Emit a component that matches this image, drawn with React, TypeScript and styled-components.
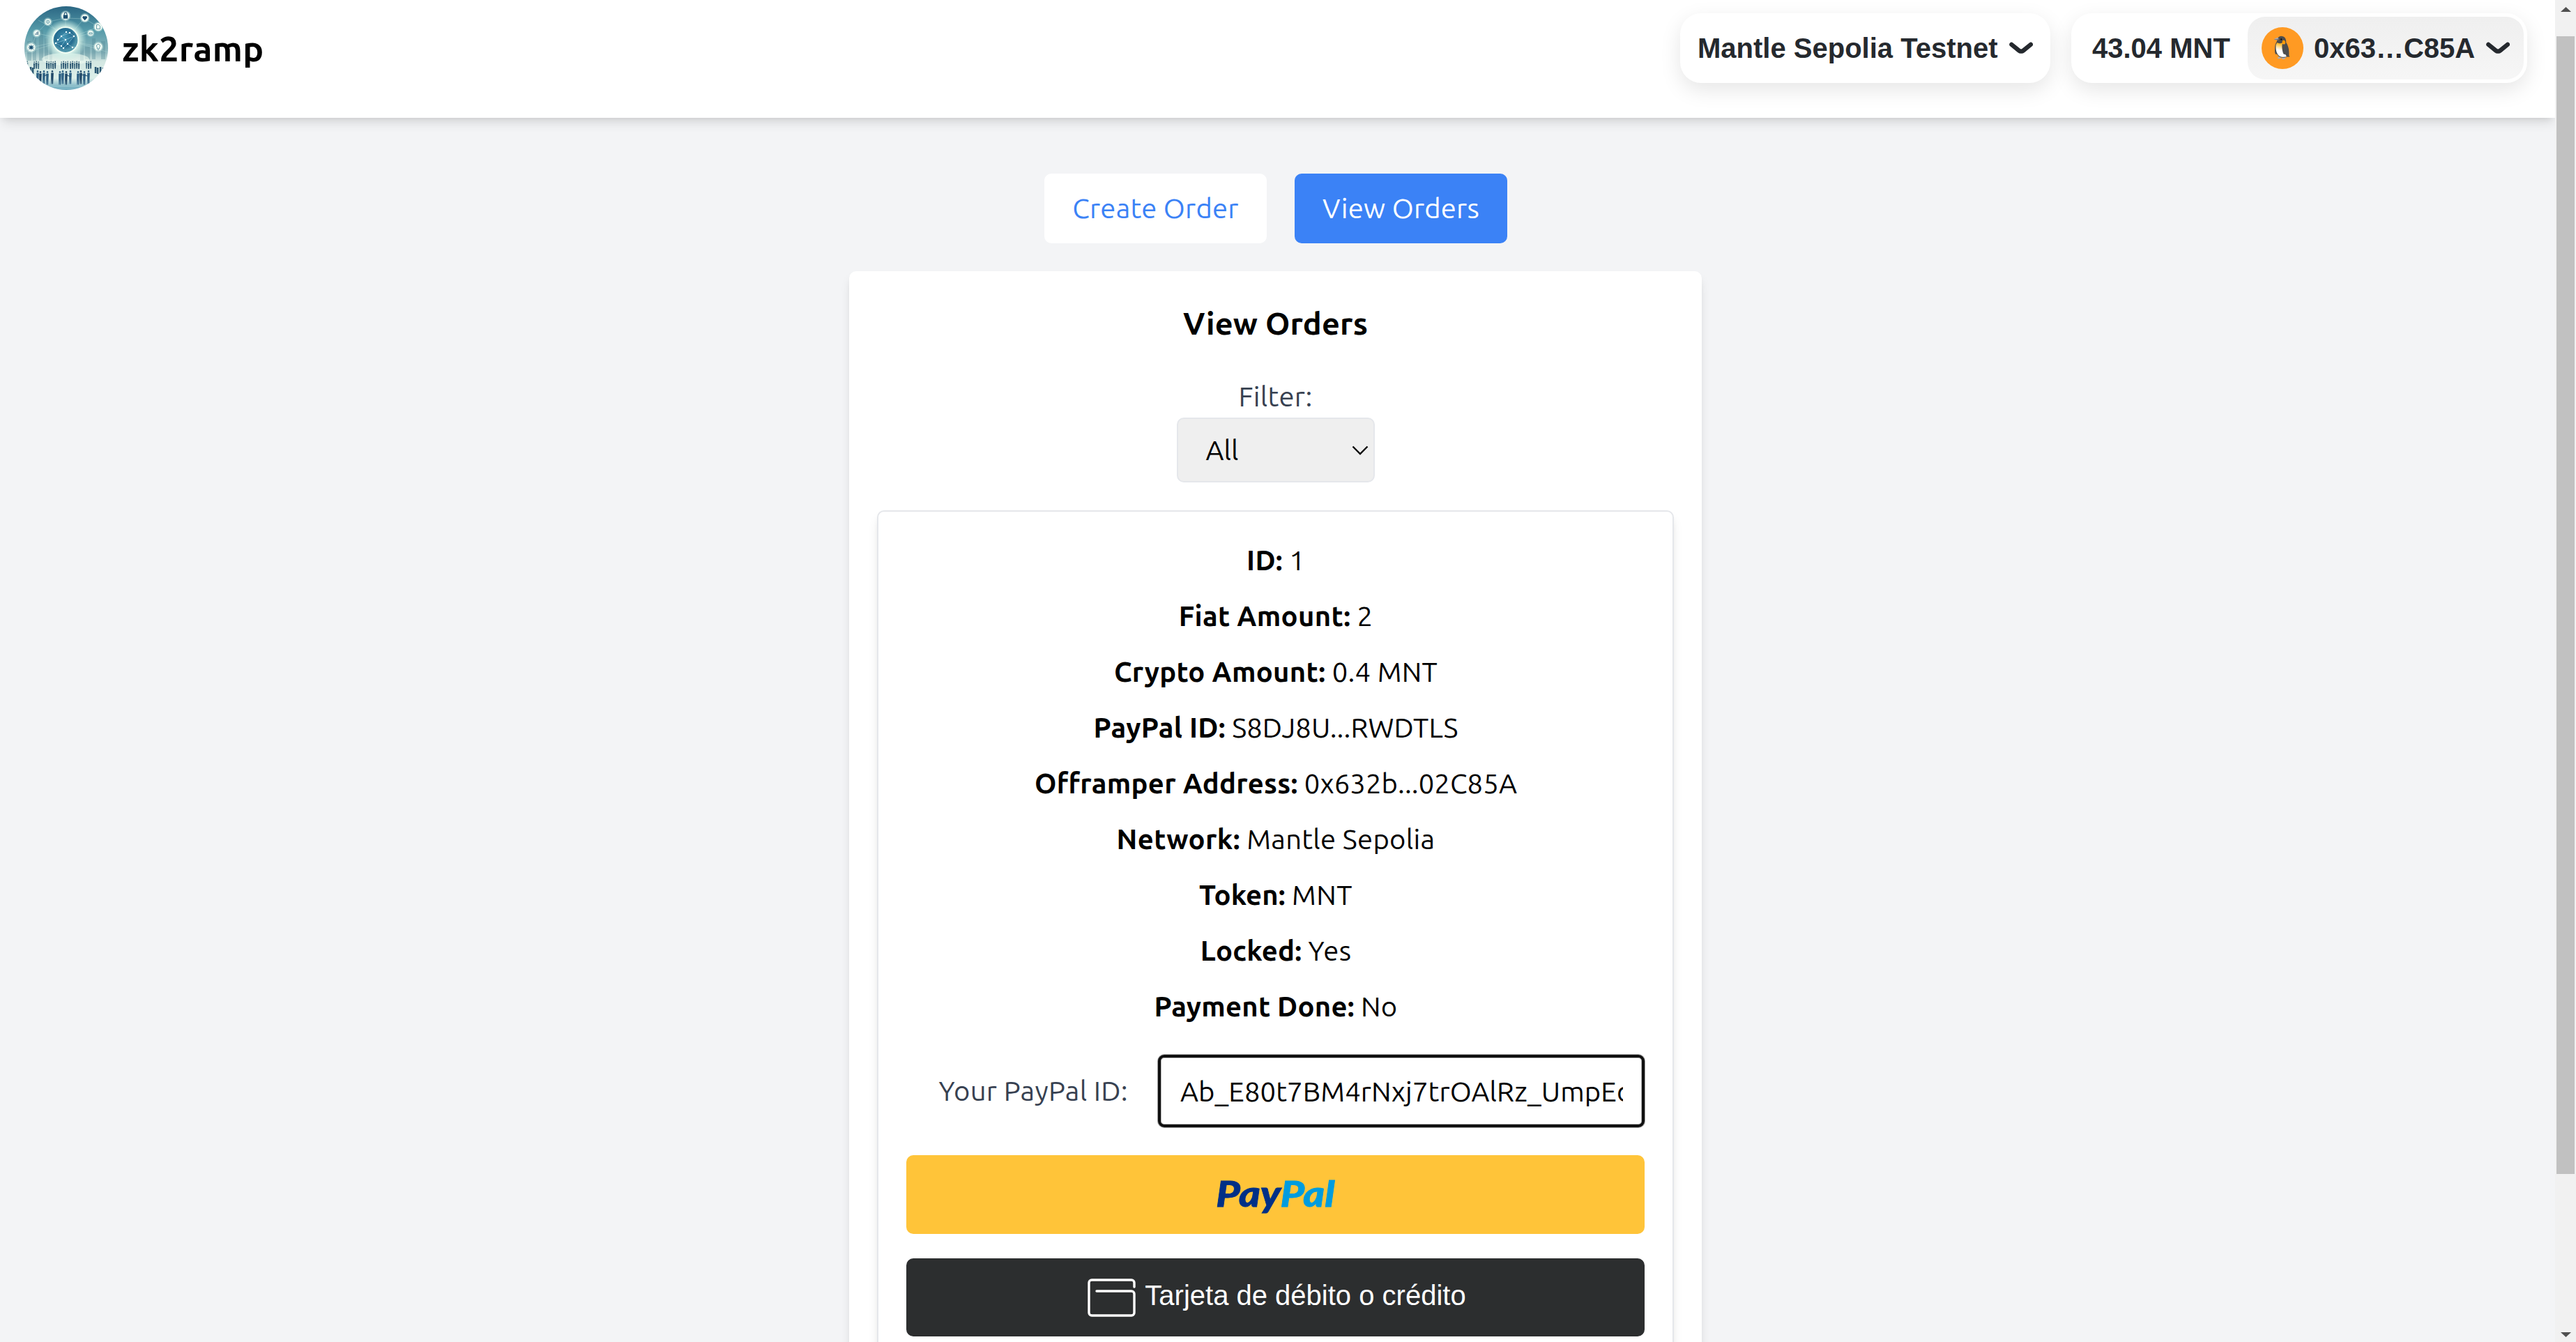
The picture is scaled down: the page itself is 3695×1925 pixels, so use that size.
import React from "react";
import styled, { createGlobalStyle } from "styled-components";

const GlobalStyle = createGlobalStyle`
  *, *::before, *::after { box-sizing: border-box; }
  html, body { margin: 0; padding: 0; overflow: hidden; }
  body {
    background: #f3f4f6;
    color: #000;
    font-family: Ubuntu, "Noto Sans", sans-serif;
    font-size: 40px;
    line-height: 60px;
  }
  button, input { font: inherit; color: inherit; }
`;

const Window = styled.div`
  display: flex;
  width: 3695px;
  height: 1925px;
  overflow: hidden;
`;

const Page = styled.div`
  display: flex;
  flex-direction: column;
  width: 3665px;
  height: 1925px;
  overflow: hidden;
  background: #f3f4f6;
`;

const Header = styled.header`
  display: flex;
  flex: none;
  align-items: center;
  justify-content: space-between;
  height: 169px;
  padding: 9px 40px 40px 35px;
  background: #fff;
  box-shadow: 0 10px 15px -2.5px rgba(0, 0, 0, 0.1), 0 5px 10px -5px rgba(0, 0, 0, 0.1);
  z-index: 1;
`;

const Brand = styled.div`
  display: flex;
  align-items: center;
  gap: 20px;
`;

const BrandName = styled.h1`
  margin: 0;
  font-size: 50px;
  font-weight: 700;
  line-height: 70px;
  letter-spacing: 0.35px;
`;

const Wallet = styled.div`
  display: flex;
  gap: 30px;
  color: #25292e;
  font-family: "Liberation Sans", Arial, sans-serif;
  font-weight: 700;
  line-height: 46px;
`;

const Pill = styled.div<{ $width: number; $pad: string }>`
  display: flex;
  align-items: center;
  justify-content: space-between;
  width: ${(p) => p.$width}px;
  height: 100px;
  padding: ${(p) => p.$pad};
  border-radius: 30px;
  background: #fff;
  box-shadow: 0 10px 30px rgba(0, 0, 0, 0.1);
  white-space: nowrap;
`;

const Account = styled.div`
  display: flex;
  align-items: center;
  width: 396px;
  height: 90px;
  padding: 0 20px;
  border-radius: 25px;
  background: linear-gradient(#efefef, #f6f6f6);
`;

const Avatar = styled.span`
  display: flex;
  flex: none;
  align-items: center;
  justify-content: center;
  width: 60px;
  height: 60px;
  margin-right: 15px;
  border-radius: 50%;
  background: #ff9a23;
  font-family: "Noto Color Emoji", sans-serif;
  font-size: 31px;
  font-weight: 400;
  line-height: 60px;
`;

const Address = styled.span`
  flex: 1;
`;

const ChevronSvg = styled.svg`
  display: block;
  flex: none;
  width: 35px;
  height: 17.5px;
`;

const Main = styled.main`
  display: flex;
  flex-direction: column;
  align-items: center;
  padding: 80px 5px 0 0;
`;

const Tabs = styled.nav`
  display: flex;
  gap: 40px;
  margin-bottom: 40px;
`;

const Tab = styled.button<{ $active?: boolean; $width: number }>`
  width: ${(p) => p.$width}px;
  height: 100px;
  padding: 0;
  border: 0;
  border-radius: 10px;
  background: ${(p) => (p.$active ? "#3b82f6" : "#fff")};
  color: ${(p) => (p.$active ? "#fff" : "#3b82f6")};
  letter-spacing: 0.2px;
`;

const Card = styled.section`
  display: flex;
  flex: none;
  flex-direction: column;
  align-items: center;
  width: 1223px;
  height: 1700px;
  margin-right: 1px;
  padding: 40px;
  border-radius: 10px;
  background: #fff;
  box-shadow: 0 10px 15px -2.5px rgba(0, 0, 0, 0.1), 0 5px 10px -5px rgba(0, 0, 0, 0.1);
`;

const Heading = styled.h2`
  margin: 0 0 40px;
  font-size: 45px;
  font-weight: 700;
  line-height: 70px;
  letter-spacing: 0.15px;
`;

const Label = styled.label`
  color: #374151;
  letter-spacing: 0.28px;
`;

const Select = styled.div`
  display: flex;
  flex: none;
  align-items: center;
  justify-content: space-between;
  width: 284px;
  height: 93px;
  margin-bottom: 40px;
  padding: 0 7px 0 40px;
  border: 2px solid #e5e7eb;
  border-radius: 10px;
  background: #efefef;
`;

const SelectArrow = styled.svg`
  display: block;
  width: 24px;
  height: 14px;
`;

const Order = styled.article`
  display: flex;
  flex: none;
  flex-direction: column;
  width: 1143px;
  height: 1500px;
  padding: 40px;
  border: 2px solid #e5e7eb;
  border-radius: 10px;
  background: #fff;
  box-shadow: 0 10px 15px -2.5px rgba(0, 0, 0, 0.1), 0 5px 10px -5px rgba(0, 0, 0, 0.1);
`;

const Field = styled.p`
  margin: 0 0 20px;
  padding-left: 1px;
  text-align: center;
  white-space: nowrap;
`;

const FieldName = styled.strong<{ $track: number }>`
  font-weight: 700;
  letter-spacing: ${(p) => p.$track}px;
`;

const FieldValue = styled.span<{ $track: number }>`
  letter-spacing: ${(p) => p.$track}px;
`;

const PayerRow = styled.div`
  display: flex;
  align-items: center;
  justify-content: flex-end;
  gap: 43px;
  margin: 19px 0 40px;
`;

const PayerInput = styled.input`
  width: 698px;
  height: 104px;
  padding: 0 27px 0 28px;
  border: 4px solid #101010;
  border-radius: 9px;
  outline: none;
  background: #fff;
  box-shadow: 0 0 0 1px #a3a3a3, inset 0 0 0 1px #b5b5b5;
  letter-spacing: 0.11px;
`;

const PayButton = styled.button<{ $dark?: boolean }>`
  display: flex;
  flex: none;
  align-items: center;
  justify-content: center;
  height: ${(p) => (p.$dark ? 112 : 113)}px;
  margin: 0 0 35px;
  padding: 0 0 0 ${(p) => (p.$dark ? 4 : 0)}px;
  border: 0;
  border-radius: 10px;
  background: ${(p) => (p.$dark ? "#2c2e2f" : "#ffc439")};
  color: #fff;
  font-family: "Liberation Sans", Arial, sans-serif;
`;

const Wordmark = styled.span`
  display: block;
  padding-bottom: 6px;
  color: #003087;
  font-family: Lato, sans-serif;
  font-size: 52px;
  font-style: italic;
  font-weight: 900;
  line-height: 60px;
  transform: scaleX(1.13);
  -webkit-text-stroke: 0.8px currentColor;
`;

const WordmarkTail = styled.span`
  color: #009cde;
`;

const CardIcon = styled.svg`
  display: block;
  width: 69px;
  height: 55px;
  margin-right: 13px;
`;

const CardText = styled.span`
  padding-bottom: 7px;
`;

const ScrollTrack = styled.div`
  display: flex;
  flex-direction: column;
  align-items: center;
  justify-content: space-between;
  width: 30px;
  height: 1925px;
  padding: 10px 0 7px;
  background: #f1f1f1;
`;

const ScrollThumb = styled.div`
  width: 26px;
  height: 1632px;
  margin: 35px 0 auto;
  background: #c1c1c1;
`;

const ScrollArrow = styled.svg`
  display: block;
  width: 15px;
  height: 7px;
`;

const Chevron = () => (
  <ChevronSvg viewBox="0 0 14 7" fill="none">
    <path
      d="M12.75 1.54001L8.51647 5.0038C7.77974 5.60658 6.72026 5.60658 5.98352 5.0038L1.75 1.54001"
      stroke="currentColor"
      strokeWidth="2.5"
      strokeLinecap="round"
      strokeLinejoin="round"
    />
  </ChevronSvg>
);

const nodes = [
  { x: 59, y: 13.7, r: 5.8 },
  { x: 86.7, y: 16.7, r: 5.2 },
  { x: 106, y: 29.5, r: 5.6 },
  { x: 95, y: 38.5, r: 3.8 },
  { x: 106, y: 58, r: 5.6 },
  { x: 33.7, y: 22.3, r: 4.4 },
  { x: 17.7, y: 38.7, r: 4.4 },
  { x: 9.7, y: 59, r: 5.8 },
];

const farPeople = [4, 14, 17, 20, 32, 35, 38, 41, 44, 53, 56, 59, 62, 66, 69, 72, 75, 78, 89, 92, 95];
const nearPeople = [19, 23, 28, 33, 40, 51, 55, 60, 66, 77, 81, 86, 92];
const sidePeople = [9, 12, 102, 105, 109, 113];
const stars = [
  [53, 43], [59, 48], [65, 38], [71, 43], [62, 54], [53, 57], [48, 48], [69, 59], [56, 60], [45, 53], [60, 37],
];
const towers = [
  [4, 50, 6, 28], [12, 44, 5, 34], [21, 34, 6, 44], [29, 46, 5, 30], [36, 55, 4, 22], [80, 50, 5, 28],
  [87, 58, 7, 18], [97, 46, 5, 30], [110, 50, 6, 26],
];

const Logo = () => (
  <svg width="120" height="120" viewBox="0 0 120 120">
    <defs>
      <linearGradient id="sky" x1="0" y1="0" x2="0" y2="1">
        <stop offset="0" stopColor="#2a6683" />
        <stop offset="0.28" stopColor="#559aa9" />
        <stop offset="0.55" stopColor="#8fb9bf" />
        <stop offset="0.66" stopColor="#d3e7e2" />
        <stop offset="0.86" stopColor="#dcefe9" />
        <stop offset="1" stopColor="#5c9fb6" />
      </linearGradient>
      <radialGradient id="glow">
        <stop offset="0.58" stopColor="#f4fff2" stopOpacity="1" />
        <stop offset="0.7" stopColor="#d9f6ec" stopOpacity="0.7" />
        <stop offset="1" stopColor="#c8eee6" stopOpacity="0" />
      </radialGradient>
      <radialGradient id="globe" cx="0.45" cy="0.4">
        <stop offset="0" stopColor="#4596b4" />
        <stop offset="0.7" stopColor="#246c90" />
        <stop offset="1" stopColor="#4f95aa" />
      </radialGradient>
      <clipPath id="disc">
        <circle cx="60" cy="60" r="60" />
      </clipPath>
    </defs>
    <g clipPath="url(#disc)">
      <rect width="120" height="120" fill="url(#sky)" />
      {towers.map(([x, y, w, h]) => (
        <rect key={x} x={x} y={y} width={w} height={h} fill="#4f8795" opacity="0.35" />
      ))}
      <g stroke="#bfe3df" strokeWidth="0.5" opacity="0.65">
        {nodes.map((n) => (
          <line key={n.x + n.y} x1="59" y1="48" x2={n.x} y2={n.y} />
        ))}
        <path d="M9.7 59L17.7 38.7 33.7 22.3 59 17 86.7 18 106 29.5M0 67L40 55M120 66L78 53M20 20L46 34" fill="none" />
      </g>
      <ellipse cx="59" cy="76" rx="34" ry="9" fill="#f0fbf2" opacity="0.6" />
      <circle cx="59" cy="48.5" r="30" fill="url(#glow)" />
      <circle cx="59" cy="48.5" r="18.2" fill="url(#globe)" stroke="#f1fff4" strokeWidth="1.6" />
      <path
        d="M45 53L53 43 65 38 71 43 59 48 53 57 45 53 59 48 62 54 69 59M48 48L60 37M56 60L62 54 71 43M53 43L59 48M69 59L76 58"
        fill="none"
        stroke="#a8dbe6"
        strokeWidth="0.5"
      />
      {stars.map(([x, y]) => (
        <circle key={`${x}-${y}`} cx={x} cy={y} r="1.2" fill="#f3ffff" />
      ))}
      {nodes.map((n) => (
        <g key={`${n.x}-${n.y}`}>
          <circle cx={n.x} cy={n.y} r={n.r + 1.6} fill="#dff6ee" opacity="0.4" />
          <circle cx={n.x} cy={n.y} r={n.r} fill="#eefaf3" />
        </g>
      ))}
      <g fill="#1d4f72">
        <rect x="55.8" y="12.6" width="6.4" height="5.2" rx="0.6" />
        <path d="M57.2 13v-2a1.9 1.9 0 0 1 3.8 0v2" fill="none" stroke="#1d4f72" strokeWidth="1.1" />
        <path d="M86.7 20.2l-3.2-3.4a1.9 1.9 0 0 1 3.2-2 1.9 1.9 0 0 1 3.2 2z" />
        <path d="M6.6 56.4l6.2 5.2M12.8 56.4l-6.2 5.2M9.7 55.4v7.2M5.8 59h7.8" stroke="#1d5b7c" strokeWidth="1.1" />
        <circle cx="9.7" cy="59" r="2" />
        <path d="M15.5 41v-2h1v2zM17.3 41v-4h1v4zM19 41v-5h1v5z" opacity="0.8" />
      </g>
      <g fill="none" stroke="#5f97a6" strokeWidth="0.9">
        <circle cx="33.7" cy="22.3" r="2.3" />
        <path d="M33.7 21v2.8M103.5 26.5h3l2 2v4h-5zM93 40h4.2v-2H93z" />
        <path d="M104.3 58.8a2.5 2.5 0 1 1 3.4 0v2h-3.4zM104.8 62.3h2.4" />
      </g>
      {farPeople.map((x, i) => (
        <g key={x} fill={i % 3 ? "#2f5a74" : "#4a7488"}>
          <circle cx={x + 0.2} cy={79.4 + (i % 2) * 0.7} r="0.9" />
          <path d={`M${x - 1.1} ${81 + (i % 2) * 0.7}h2.4l-.3 8.4h-1.7z`} />
        </g>
      ))}
      {sidePeople.map((x, i) => (
        <path key={x} d={`M${x - 1.2} ${87 + (i % 2)}h2.6v9h-2.6z`} fill="#2b5873" />
      ))}
      {nearPeople.map((x, i) => (
        <g key={x} fill={i % 3 === 1 ? "#1f4767" : "#2c6084"}>
          <circle cx={x} cy={93.4 + (i % 2)} r="1.3" />
          <path d={`M${x - 1.8} ${95.4 + (i % 2)}h3.7l-.4 8-.5 8h-1l-.2-7-.4 7h-.9l-.3-8z`} />
        </g>
      ))}
      <path d="M28 100l5-2M61 99l6 2M81 98l10 2" stroke="#234f6d" strokeWidth="1.2" />
      <path d="M34 115h52M42 118h36" stroke="#a4d3d9" strokeWidth="1" opacity="0.6" />
    </g>
  </svg>
);

type OrderField = { name: string; value: string; nameTrack: number; valueTrack: number };

const fields: OrderField[] = [
  { name: "ID:", value: "1", nameTrack: 0.3, valueTrack: 0.2 },
  { name: "Fiat Amount:", value: "2", nameTrack: 0.32, valueTrack: 0.2 },
  { name: "Crypto Amount:", value: "0.4 MNT", nameTrack: 0.3, valueTrack: 0.25 },
  { name: "PayPal ID:", value: "S8DJ8U...RWDTLS", nameTrack: 0.33, valueTrack: 0.08 },
  { name: "Offramper Address:", value: "0x632b...02C85A", nameTrack: 0.3, valueTrack: 0.08 },
  { name: "Network:", value: "Mantle Sepolia", nameTrack: 0.38, valueTrack: 0.28 },
  { name: "Token:", value: "MNT", nameTrack: 0.15, valueTrack: 0.45 },
  { name: "Locked:", value: "Yes", nameTrack: 0.28, valueTrack: 0.3 },
  { name: "Payment Done:", value: "No", nameTrack: 0.23, valueTrack: 0.3 },
];

export default function App() {
  return (
    <Window>
      <GlobalStyle />
      <Page>
        <Header>
          <Brand>
            <Logo />
            <BrandName>zk2ramp</BrandName>
          </Brand>
          <Wallet>
            <Pill $width={531} $pad="0 25px">
              <span>Mantle Sepolia Testnet</span>
              <Chevron />
            </Pill>
            <Pill $width={654} $pad="0 5px 0 30px">
              <span>43.04 MNT</span>
              <Account>
                <Avatar>🐧</Avatar>
                <Address>0x63…C85A</Address>
                <Chevron />
              </Account>
            </Pill>
          </Wallet>
        </Header>
        <Main>
          <Tabs>
            <Tab $width={319}>Create Order</Tab>
            <Tab $width={305} $active>
              View Orders
            </Tab>
          </Tabs>
          <Card>
            <Heading>View Orders</Heading>
            <Label>Filter:</Label>
            <Select>
              <span>All</span>
              <SelectArrow viewBox="0 0 24 14" fill="none">
                <path d="M1.5 1.5L12 12 22.5 1.5" stroke="#000" strokeWidth="2.3" />
              </SelectArrow>
            </Select>
            <Order>
              {fields.map((f) => (
                <Field key={f.name}>
                  <FieldName $track={f.nameTrack}>{f.name}</FieldName>{" "}
                  <FieldValue $track={f.valueTrack}>{f.value}</FieldValue>
                </Field>
              ))}
              <PayerRow>
                <Label>Your PayPal ID:</Label>
                <PayerInput defaultValue="Ab_E80t7BM4rNxj7trOAlRz_UmpEcQ" />
              </PayerRow>
              <PayButton>
                <Wordmark>
                  Pay<WordmarkTail>Pal</WordmarkTail>
                </Wordmark>
              </PayButton>
              <PayButton $dark>
                <CardIcon viewBox="0 0 69 55" fill="none" stroke="#fff" strokeWidth="3.4">
                  <path
                    d="M67 12V6a4 4 0 0 0-4-4H6a4 4 0 0 0-4 4v43a4 4 0 0 0 4 4h57a4 4 0 0 0 4-4V22a4 4 0 0 0-4-4H13"
                    strokeLinecap="round"
                  />
                </CardIcon>
                <CardText>Tarjeta de débito o crédito</CardText>
              </PayButton>
            </Order>
          </Card>
        </Main>
      </Page>
      <ScrollTrack>
        <ScrollArrow viewBox="0 0 15 7">
          <path d="M0 7L7.5 0 15 7z" fill="#505050" />
        </ScrollArrow>
        <ScrollThumb />
        <ScrollArrow viewBox="0 0 15 7">
          <path d="M0 0L7.5 7 15 0z" fill="#505050" />
        </ScrollArrow>
      </ScrollTrack>
    </Window>
  );
}
